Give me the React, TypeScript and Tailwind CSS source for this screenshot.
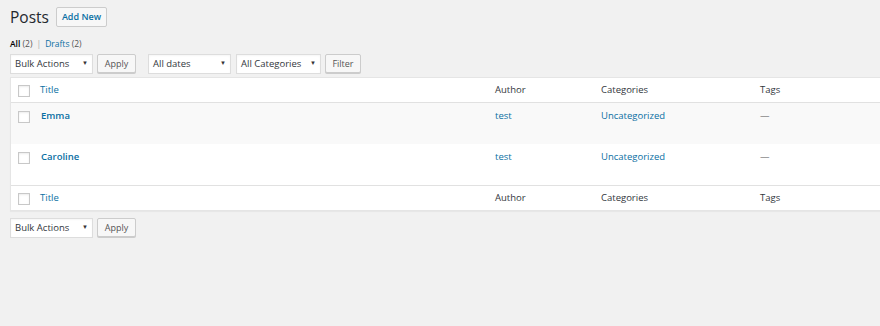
import React from 'react';

const font = { fontFamily: '"Open Sans", "Noto Sans", sans-serif' };

function Select({ label, width }: { label: string; width: string }) {
  return (
    <div
      className={`flex h-[20px] items-center justify-between border border-[#dddddd] bg-white pl-[4px] pr-[4px] text-[9.5px] text-[#32373c] shadow-[inset_0_1px_2px_rgba(0,0,0,0.04)] ${width}`}
    >
      <span>{label}</span>
      <span className="text-[6px] text-[#333]">▼</span>
    </div>
  );
}

function Btn({ label, width }: { label: string; width: string }) {
  return (
    <button
      className={`flex h-[19px] items-center justify-center rounded-[2px] border border-[#cccccc] bg-[#f7f7f7] text-[9px] text-[#555] shadow-[0_1px_0_#cccccc] ${width}`}
    >
      {label}
    </button>
  );
}

function Check() {
  return <div className="h-[12px] w-[12px] border border-[#c8c8c8] bg-white shadow-[inset_0_1px_2px_rgba(0,0,0,0.08)]" />;
}

const posts = ['Emma', 'Caroline'];

function HeaderRow({ top }: { top?: boolean }) {
  return (
    <div
      className={`flex h-[25px] items-start text-[9.5px] text-[#32373c] ${top ? 'border-b border-[#e1e1e1]' : 'border-t border-[#e1e1e1]'}`}
    >
      <div className="w-[26px] shrink-0 pl-[7px] pt-[7px]">
        <Check />
      </div>
      <div className="w-[451px] shrink-0 pl-[3px] pt-[5px] text-[#0a6fa3]">Title</div>
      <div className="w-[106px] shrink-0 pl-[7px] pt-[5px]">Author</div>
      <div className="w-[159px] shrink-0 pl-[7px] pt-[5px]">Categories</div>
      <div className="flex-1 pl-[7px] pt-[5px]">Tags</div>
    </div>
  );
}

export default function App() {
  return (
    <div className="h-[326px] w-[880px] overflow-hidden bg-[#f1f1f1] pl-[10px] pt-[6px]" style={font}>
      <div className="flex items-center gap-[7px]">
        <h1 className="text-[15.5px] font-normal leading-[22px] text-[#23282d]">Posts</h1>
        <button className="flex h-[20px] w-[51px] items-center justify-center rounded-[2px] border border-[#cccccc] bg-[#f7f7f7] text-[9px] font-semibold text-[#0a6fa3]">
          Add New
        </button>
      </div>

      <div className="mt-[10px] flex items-center gap-[4px] text-[8.5px] text-[#555]">
        <span>
          <span className="font-semibold text-[#000]">All</span> (2)
        </span>
        <span className="text-[#aaa]">|</span>
        <span>
          <span className="text-[#0a6fa3]">Drafts</span> (2)
        </span>
      </div>

      <div className="mt-[3px] flex items-center">
        <Select label="Bulk Actions" width="w-[83px]" />
        <div className="ml-[4px]">
          <Btn label="Apply" width="w-[39px]" />
        </div>
        <div className="ml-[12px]">
          <Select label="All dates" width="w-[83px]" />
        </div>
        <div className="ml-[5px]">
          <Select label="All Categories" width="w-[85px]" />
        </div>
        <div className="ml-[4px]">
          <Btn label="Filter" width="w-[36px]" />
        </div>
      </div>

      <div className="mt-[3px] border border-r-0 border-[#e5e5e5] bg-white shadow-[0_1px_1px_rgba(0,0,0,0.04)]">
        <HeaderRow top />
        {posts.map((name, i) => (
          <div key={name} className={`flex h-[41px] items-start text-[9.5px] ${i === 0 ? 'bg-[#f9f9f9]' : 'bg-white'}`}>
            <div className="w-[26px] shrink-0 pl-[7px] pt-[8px]">
              <Check />
            </div>
            <div className="w-[451px] shrink-0 pl-[4px] pt-[6px] font-semibold text-[#0a6fa3]">{name}</div>
            <div className="w-[106px] shrink-0 pl-[7px] pt-[6px] text-[#0a6fa3]">test</div>
            <div className="w-[159px] shrink-0 pl-[7px] pt-[6px] text-[#0a6fa3]">Uncategorized</div>
            <div className="flex-1 pl-[7px] pt-[6px] text-[#555]">—</div>
          </div>
        ))}
        <HeaderRow />
      </div>

      <div className="mt-[7px] flex items-center">
        <Select label="Bulk Actions" width="w-[83px]" />
        <div className="ml-[4px]">
          <Btn label="Apply" width="w-[39px]" />
        </div>
      </div>
    </div>
  );
}
